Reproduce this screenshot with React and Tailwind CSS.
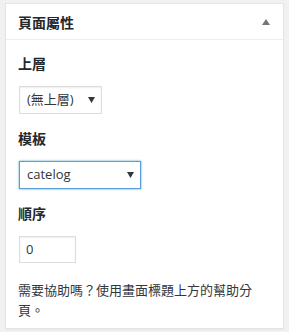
const cjk = { fontFamily: '"Noto Sans CJK TC", "Noto Sans", sans-serif' };
const latin = { fontFamily: '"Open Sans", "Noto Sans CJK TC", sans-serif' };

function Caret({ className }) {
  return (
    <svg className={className} width="7" height="6" viewBox="0 0 7 6">
      <path d="M0 0h7L3.5 6z" fill="#32373c" />
    </svg>
  );
}

function FakeSelect({ value, width, focused }) {
  return (
    <div
      className={`ml-px flex h-[28px] items-center justify-between border bg-white pl-[7px] pr-[6px] text-[13px] text-[#32373c] ${
        focused
          ? "border-[#5b9dd9] shadow-[0_0_2px_rgba(30,140,190,0.8)]"
          : "border-[#dddddd] shadow-[inset_0_1px_2px_rgba(0,0,0,0.07)]"
      } ${width}`}
      style={latin}
    >
      <span>{value}</span>
      <Caret />
    </div>
  );
}

export default function App() {
  return (
    <div className="h-[332px] w-[289px] bg-[#f1f1f1] pl-[5px] pt-[3px]" style={cjk}>
      <div className="w-[279px] border border-[#e5e5e5] bg-white shadow-[0_1px_1px_rgba(0,0,0,0.04)]">
        <div className="flex h-[36px] items-center justify-between border-b border-[#eeeeee] pl-3 pr-[13px] pt-[2px]">
          <h2 className="text-[14px] font-bold text-[#23282d]">頁面屬性</h2>
          <svg width="8" height="6" viewBox="0 0 8 6" className="mb-[2px]">
            <path d="M4 0L8 6H0z" fill="#72777c" />
          </svg>
        </div>
        <div className="px-3 pb-[8px] pt-[13px] text-[#32373c]">
          <p className="text-[14px] font-bold leading-[21px] text-[#23282d]">上層</p>
          <div className="mt-[12px]">
            <FakeSelect value="(無上層)" width="w-[83px]" />
          </div>
          <p className="mt-[14px] text-[14px] font-bold leading-[21px] text-[#23282d]">模板</p>
          <div className="mt-[12px]">
            <FakeSelect value="catelog" width="w-[122px]" focused />
          </div>
          <p className="mt-[14px] text-[14px] font-bold leading-[21px] text-[#23282d]">順序</p>
          <div className="ml-px mt-[12px] flex h-[27px] w-[57px] items-center border border-[#dddddd] pl-[6px] text-[13px] text-[#32373c] shadow-[inset_0_1px_2px_rgba(0,0,0,0.07)]" style={latin}>
            0
          </div>
          <p className="mt-[17px] text-[13px] leading-[20px] text-[#32373c]">
            需要協助嗎？使用畫面標題上方的幫助分頁。
          </p>
        </div>
      </div>
    </div>
  );
}
